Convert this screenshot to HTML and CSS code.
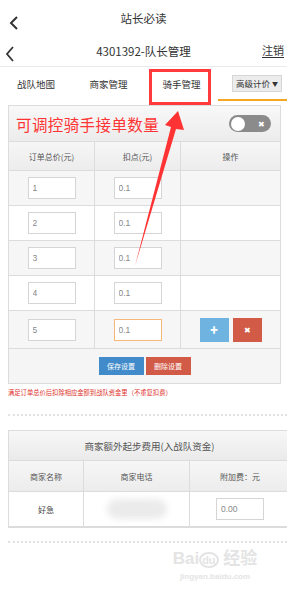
FILE: index.html
```html
<!DOCTYPE html>
<html lang="zh-CN">
<head>
  <meta charset="UTF-8">
  <meta name="viewport" content="width=device-width, initial-scale=1.0">
  <title>站长必读</title>
  <link rel="stylesheet" href="styles.css">
</head>
<body>
  <div class="topbar">
    <span class="back">
      <svg width="10" height="14" viewBox="0 0 10 14"><path d="M8 1 L2 7 L8 13" fill="none" stroke="#333" stroke-width="2"/></svg>
    </span>
    <span class="title">站长必读</span>
  </div>

  <div class="navbar">
    <span class="back">
      <svg width="10" height="16" viewBox="0 0 10 16"><path d="M8 1 L2 8 L8 15" fill="none" stroke="#333" stroke-width="1.8"/></svg>
    </span>
    <span class="title">4301392-队长管理</span>
    <span class="logout">注销</span>
  </div>

  <div class="tabs">
    <div class="tab">战队地图</div>
    <div class="tab">商家管理</div>
    <div class="tab">骑手管理</div>
    <div class="tab active"><span class="select">高级计价 <span class="caret">▼</span></span></div>
  </div>

  <div class="panel">
    <div class="panel-head">
      <span class="hint">可调控骑手接单数量</span>
      <span class="switch"><span class="knob"></span><span class="off">✖</span></span>
    </div>
    <table class="grid">
      <thead>
        <tr>
          <th class="c1">订单总价(元)</th>
          <th class="c2">扣点(元)</th>
          <th>操作</th>
        </tr>
      </thead>
      <tbody>
        <tr><td><input class="field" value="1"></td><td><input class="field" value="0.1"></td><td></td></tr>
        <tr><td><input class="field" value="2"></td><td><input class="field" value="0.1"></td><td></td></tr>
        <tr><td><input class="field" value="3"></td><td><input class="field" value="0.1"></td><td></td></tr>
        <tr><td><input class="field" value="4"></td><td><input class="field" value="0.1"></td><td></td></tr>
        <tr class="last">
          <td><input class="field" value="5"></td>
          <td><input class="field focus" value="0.1"></td>
          <td>
            <div class="ops">
              <span class="op add">✚</span>
              <span class="op del">✖</span>
            </div>
          </td>
        </tr>
      </tbody>
    </table>
    <div class="panel-foot">
      <span class="btn save">保存设置</span>
      <span class="btn remove">删除设置</span>
    </div>
  </div>

  <p class="note">满足订单总价后扣除相应金额到战队资金里（不重复扣费）</p>

  <div class="dots"></div>

  <div class="panel extra">
    <div class="extra-head">商家额外起步费用(入战队资金)</div>
    <table class="grid">
      <thead>
        <tr>
          <th class="e1">商家名称</th>
          <th class="e2">商家电话</th>
          <th>附加费：元</th>
        </tr>
      </thead>
      <tbody>
        <tr>
          <td>好急</td>
          <td><span class="blur"></span></td>
          <td><input class="field" value="0.00"></td>
        </tr>
      </tbody>
    </table>
  </div>

  <div class="dots second"></div>

  <div class="watermark">
    <div class="logo">Bai<span class="du">du</span> 经验</div>
    <div class="site">jingyan.baidu.com</div>
  </div>

  <!-- annotation overlay -->
  <div class="mark-box"></div>
  <svg class="mark-arrow" width="287" height="595" viewBox="0 0 287 595">
    <polygon points="178,111 165,125 171,127 135,266 176,129 184,130" fill="#ff3333"/>
  </svg>
</body>
</html>
```

FILE: styles.css
```css
body {
  margin: 0;
  width: 287px;
  overflow: hidden;
  background: #fff;
  color: #333;
  font-family: "Noto Sans CJK SC", "Noto Sans", sans-serif;
  position: relative;
}

.topbar {
  height: 36px;
  display: flex;
  align-items: center;
  justify-content: center;
  position: relative;
}

.topbar .title {
  font-size: 11.5px;
}

.topbar .back {
  position: absolute;
  left: 9px;
  top: 11px;
}

.navbar {
  height: 30px;
  display: flex;
  align-items: center;
  justify-content: center;
  position: relative;
  border-bottom: 1px solid #ebebeb;
}

.navbar .title {
  font-size: 11.5px;
  color: #333;
}

.navbar .back {
  position: absolute;
  left: 5px;
  top: 7px;
}

.navbar .logout {
  position: absolute;
  right: 3px;
  top: 7px;
  font-size: 11px;
  border-bottom: 1px solid #333;
  line-height: 14px;
}

.tabs {
  display: grid;
  grid-template-columns: 72px 73px 73px 1fr;
  height: 34px;
}

.tab {
  display: flex;
  align-items: center;
  justify-content: center;
  font-size: 9.5px;
  color: #333;
}

.tab.active {
  justify-content: flex-end;
  padding-right: 5px;
  border-bottom: 2px solid #f5a623;
  height: 32px;
}

.select {
  background: #ececec;
  border: 1px solid #d6d6d6;
  font-size: 8.5px;
  padding: 1px 3px;
  line-height: 12px;
}

.caret {
  font-size: 6px;
  vertical-align: 1px;
}

.panel {
  margin: 4px 6px 0 8px;
  border: 1px solid #dcdcdc;
}

.panel-head {
  height: 35px;
  background: linear-gradient(#f8f8f8, #ececec);
  border-bottom: 1px solid #dcdcdc;
  display: flex;
  align-items: center;
  justify-content: space-between;
  padding: 0 9px 0 7px;
}

.hint {
  color: #ff3333;
  font-size: 15.5px;
  letter-spacing: 0.4px;
}

.switch {
  width: 42px;
  height: 17px;
  border-radius: 9px;
  background: #8b8b8b;
  display: flex;
  align-items: center;
  justify-content: space-between;
  padding: 0 6px 0 2px;
  box-sizing: border-box;
}

.knob {
  width: 14px;
  height: 14px;
  border-radius: 50%;
  background: #fff;
}

.off {
  color: #fff;
  font-size: 8px;
  line-height: 8px;
}

.grid {
  width: 100%;
  border-collapse: collapse;
  table-layout: fixed;
}

.grid th {
  height: 26px;
  font-size: 8px;
  font-weight: normal;
  color: #555;
  background: linear-gradient(#f6f6f6, #ececec);
  border-right: 1px solid #dcdcdc;
  border-bottom: 1px solid #dcdcdc;
}

.grid th:last-child,
.grid td:last-child {
  border-right: none;
}

.grid .c1,
.grid .c2 {
  width: 83px;
}

.grid td {
  height: 34px;
  padding: 0;
  text-align: center;
  border-right: 1px solid #dcdcdc;
  border-bottom: 1px solid #dcdcdc;
  font-size: 9px;
}

.grid tbody tr:nth-child(odd) td {
  background: #f6f6f6;
}

.grid tr.last td {
  height: 37px;
}

.field {
  width: 48px;
  height: 22px;
  box-sizing: border-box;
  border: 1px solid #d5d5d5;
  background: #fff;
  font-family: "Liberation Sans", sans-serif;
  font-size: 8.5px;
  color: #888;
  padding: 0 4px;
  vertical-align: middle;
}

.field.focus {
  border-color: #f5b87a;
}

.ops {
  display: flex;
  justify-content: center;
  gap: 4px;
}

.op {
  width: 29px;
  height: 24px;
  display: flex;
  align-items: center;
  justify-content: center;
  color: #fff;
  font-size: 8px;
}

.op.add {
  background: #6fb3e0;
}

.op.del {
  background: #d15b47;
}

.panel-foot {
  height: 34px;
  background: #f5f5f5;
  display: flex;
  align-items: center;
  justify-content: center;
  gap: 2px;
}

.btn {
  width: 45px;
  height: 18px;
  display: flex;
  align-items: center;
  justify-content: center;
  color: #fff;
  font-size: 7px;
}

.btn.save {
  background: #428bca;
}

.btn.remove {
  background: #d15b47;
}

.note {
  margin: 4px 0 0 8px;
  font-size: 6.3px;
  color: #e0302a;
  line-height: 10px;
}

.dots {
  margin: 16px 0 0 8px;
  border-top: 2px dotted #e2e2e2;
}

.dots.second {
  margin-top: 13px;
}

.panel.extra {
  margin: 14px -4px 0 8px;
}

.extra-head {
  height: 29px;
  display: flex;
  align-items: center;
  justify-content: center;
  font-size: 9.5px;
  color: #555;
  background: linear-gradient(#f7f7f7, #eaeaea);
  border-bottom: 1px solid #dcdcdc;
}

.extra .grid th {
  height: 28px;
  font-size: 8px;
}

.extra .grid .e1 {
  width: 72px;
}

.extra .grid .e2 {
  width: 103px;
}

.extra .grid tbody tr td {
  background: #fff;
  font-size: 8px;
  color: #444;
}

.blur {
  display: block;
  width: 60px;
  height: 20px;
  margin: 0 auto;
  background: #ebebeb;
  border-radius: 10px;
  filter: blur(3px);
}

.watermark {
  margin: 4px 0 0 170px;
  color: #e4e4e4;
  width: 90px;
  text-align: center;
}

.logo {
  font-family: "Liberation Sans", "Noto Sans CJK SC", sans-serif;
  font-size: 17px;
  font-weight: bold;
  line-height: 24px;
}

.logo .du {
  font-size: 11px;
  border: 2px solid #e4e4e4;
  border-radius: 50%;
  padding: 0 1px;
}

.site {
  font-family: "Liberation Sans", sans-serif;
  font-size: 8px;
  font-weight: bold;
}

.mark-box {
  position: absolute;
  left: 149px;
  top: 69px;
  width: 56px;
  height: 30px;
  border: 3px solid #ff3b3b;
}

.mark-arrow {
  position: absolute;
  left: 0;
  top: 0;
  pointer-events: none;
}
```
